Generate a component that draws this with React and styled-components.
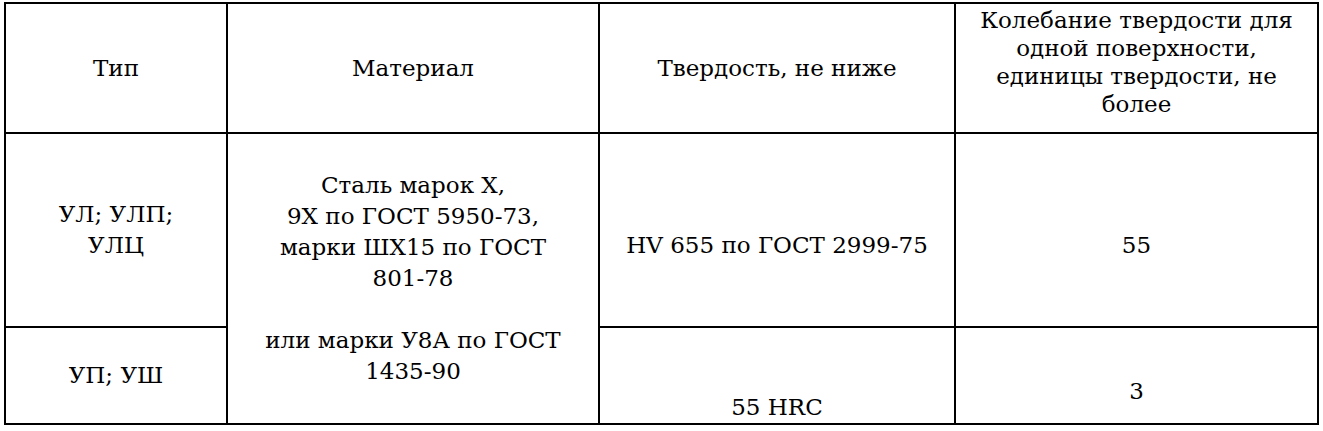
import React from 'react'
import styled, { createGlobalStyle } from 'styled-components'

const GlobalStyle = createGlobalStyle`
  html, body {
    margin: 0;
    padding: 0;
    background: #fff;
  }
  body {
    font-family: "DejaVu Serif", serif;
    color: #000;
  }
`

const Page = styled.div`
  padding: 2px 0 0 4px;
`

const Table = styled.table`
  border-collapse: collapse;
  table-layout: fixed;
  font-family: "DejaVu Serif", serif;
  font-size: 23px;
  line-height: 31px;
  color: #000;
  text-align: center;
`

const Row = styled.tr`
  height: ${p => p.h}px;
`

const Cell = styled.td`
  border: 2px solid #000;
  padding: ${p => (p.lead ? '31px 4px 0' : '0 4px')};
  vertical-align: ${p => p.align || 'middle'};
`

const HeadCell = styled(Cell)`
  line-height: ${p => (p.tight ? '28px' : '31px')};
  padding-bottom: ${p => (p.tight ? '12px' : '0')};
`

export default function App() {
  return (
    <Page>
      <GlobalStyle />
      <Table>
        <colgroup>
          <col style={{ width: 222 }} />
          <col style={{ width: 372 }} />
          <col style={{ width: 356 }} />
          <col style={{ width: 363 }} />
        </colgroup>
        <tbody>
          <Row h={130}>
            <HeadCell>Тип</HeadCell>
            <HeadCell>Материал</HeadCell>
            <HeadCell>Твердость, не ниже</HeadCell>
            <HeadCell tight>
              Колебание твердости для
              <br />
              одной поверхности,
              <br />
              единицы твердости, не
              <br />
              более
            </HeadCell>
          </Row>
          <Row h={194}>
            <Cell>
              УЛ; УЛП;
              <br />
              УЛЦ
            </Cell>
            <Cell rowSpan={2}>
              Сталь марок X,
              <br />
              9X по ГОСТ 5950-73,
              <br />
              марки ШХ15 по ГОСТ
              <br />
              801-78
              <br />
              <br />
              или марки У8А по ГОСТ
              <br />
              1435-90
            </Cell>
            <Cell lead>HV 655 по ГОСТ 2999-75</Cell>
            <Cell lead>55</Cell>
          </Row>
          <Row h={97}>
            <Cell>УП; УШ</Cell>
            <Cell align="bottom">55 HRC</Cell>
            <Cell lead>3</Cell>
          </Row>
        </tbody>
      </Table>
    </Page>
  )
}
